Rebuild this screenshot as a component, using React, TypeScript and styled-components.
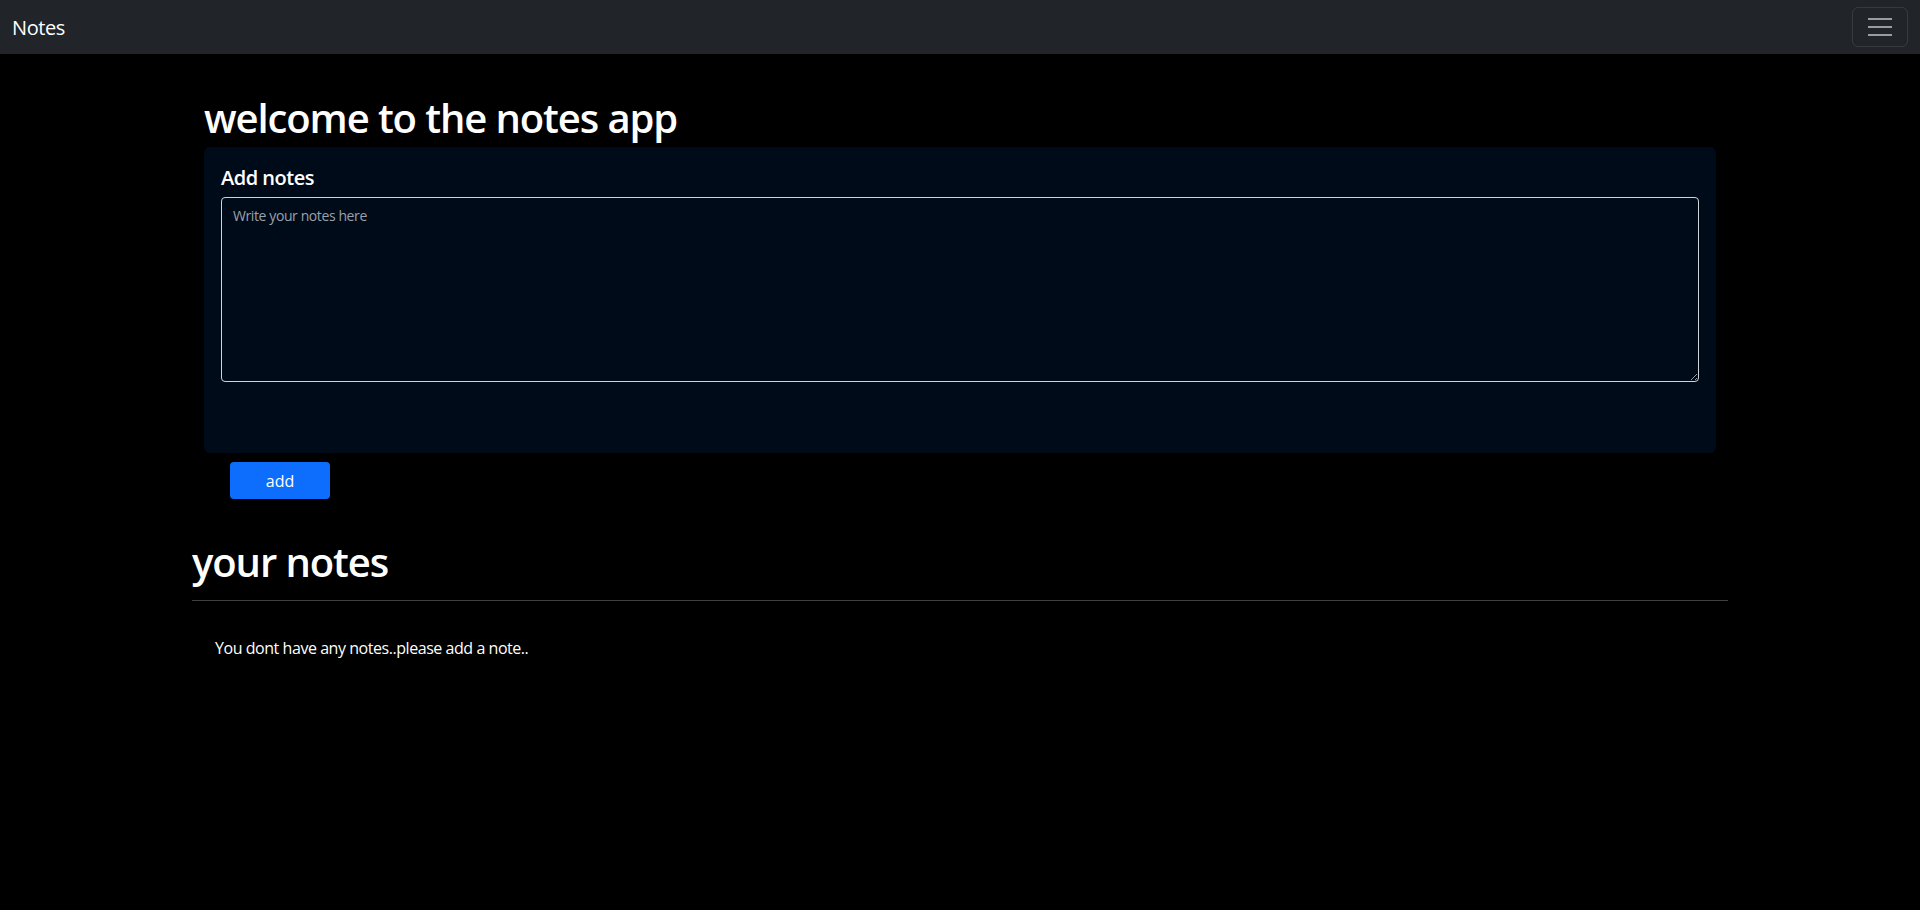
import styled, { createGlobalStyle } from 'styled-components';

const GlobalStyle = createGlobalStyle`
  body {
    margin: 0;
    background: #000;
    color: #fff;
    font-family: "Open Sans", "Noto Sans", sans-serif;
  }
`;

const Navbar = styled.nav`
  height: 54px;
  background: #212529;
  display: flex;
  align-items: center;
  justify-content: space-between;
  padding: 0 12px;
`;

const Brand = styled.a`
  color: #fff;
  font-size: 20px;
  letter-spacing: -0.4px;
  text-decoration: none;
`;

const Toggler = styled.button`
  width: 56px;
  height: 40px;
  background: transparent;
  border: 1px solid rgba(255, 255, 255, 0.1);
  border-radius: 6px;
  display: flex;
  align-items: center;
  justify-content: center;
  padding: 0;
`;

const Main = styled.main`
  width: 80%;
  margin: 0 auto;
`;

const AddSection = styled.section`
  padding: 0 12px;
`;

const Title = styled.h1`
  font-size: 40px;
  font-weight: 600;
  letter-spacing: -1.1px;
  line-height: 1.2;
  margin: 0;
`;

const WelcomeTitle = styled(Title)`
  margin: 40px 0 5px;
`;

const Card = styled.div`
  background: #000b1a;
  border-radius: 6px;
  padding: 19px 17px 71px;
`;

const Label = styled.label`
  display: block;
  font-size: 20px;
  font-weight: 600;
  letter-spacing: -0.5px;
  line-height: 1.2;
  margin-bottom: 7px;
`;

const NoteInput = styled.textarea`
  display: block;
  box-sizing: border-box;
  width: 100%;
  height: 185px;
  background: transparent;
  color: #fff;
  border: 1px solid #d0d4d9;
  border-radius: 4px;
  padding: 8px 11px;
  font-family: inherit;
  font-size: 14px;
  letter-spacing: -0.4px;

  &::placeholder {
    color: #9aa1aa;
  }
`;

const AddButton = styled.button`
  width: 100px;
  height: 37px;
  margin: 9px 0 0 26px;
  background: #0d6efd;
  color: #fff;
  border: none;
  border-radius: 4px;
  font-family: inherit;
  font-size: 16px;
`;

const NotesSection = styled.section`
  margin-top: 39px;
`;

const Divider = styled.hr`
  border: none;
  border-top: 1px solid rgba(255, 255, 255, 0.25);
  margin: 14px 0 35px;
`;

const Empty = styled.p`
  margin: 0;
  padding-left: 23px;
  font-size: 16px;
  letter-spacing: -0.45px;
  line-height: 24px;
`;

const MenuIcon = () => (
  <svg width="24" height="24" viewBox="0 0 24 24">
    <path d="M0 4h24M0 12h24M0 20h24" stroke="rgba(255,255,255,0.55)" strokeWidth="2" />
  </svg>
);

export default function App() {
  return (
    <>
      <GlobalStyle />
      <Navbar>
        <Brand href="#">Notes</Brand>
        <Toggler aria-label="menu">
          <MenuIcon />
        </Toggler>
      </Navbar>
      <Main>
        <AddSection>
          <WelcomeTitle>welcome to the notes app</WelcomeTitle>
          <Card>
            <Label htmlFor="note">Add notes</Label>
            <NoteInput id="note" placeholder="Write your notes here" />
          </Card>
          <AddButton>add</AddButton>
        </AddSection>
        <NotesSection>
          <Title>your notes</Title>
          <Divider />
          <Empty>You dont have any notes..please add a note..</Empty>
        </NotesSection>
      </Main>
    </>
  );
}
